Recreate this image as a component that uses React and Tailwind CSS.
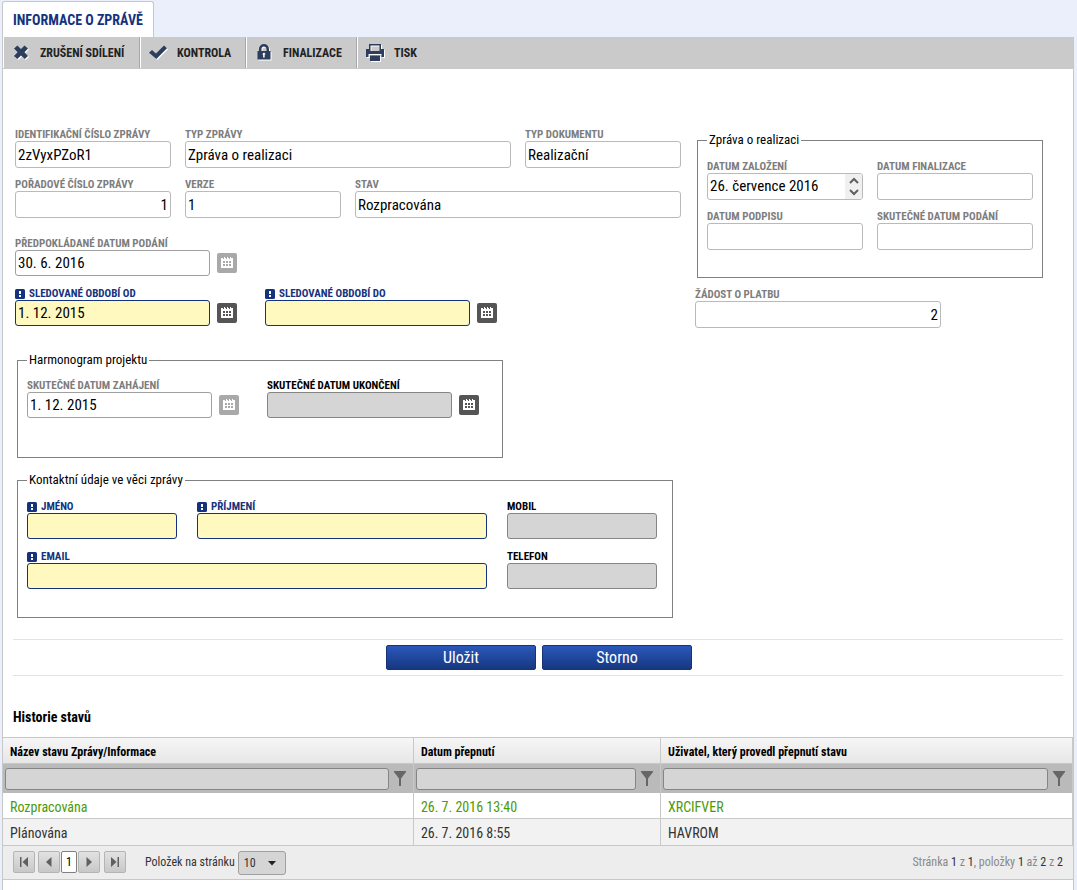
import React, { useState } from 'react';
import clsx from 'clsx';

const inputStyles = {
    plain: "border-[#bababa] bg-white h-[27px] text-[15px]",
    date: "border-[#a0a0a0] bg-white h-[26px] text-[15px]",
    required: "border-[#14327d] bg-[#fff9c0] h-[26px] text-[15px]",
    optional: "border-[#858585] bg-[#d5d5d5] h-[26px] text-[15px]",
};

const labelStyles = {
    plain: "text-[#7d7d7d]",
    date: "text-[#7d7d7d]",
    required: "text-[#14327d]",
    optional: "text-black",
};

function RequiredMark() {
    return (
        <svg width="10" height="10" viewBox="0 0 10 10" aria-hidden="true" className="shrink-0">
            <rect width="10" height="10" rx="1.5" fill="#14327d" />
            <path d="M4 2h2v3H4zM4 6h2v2H4z" fill="#fff" />
        </svg>
    );
}

function CalendarButton({ disabled, label }) {
    return (
        <button
            type="button"
            disabled={disabled}
            aria-label={label}
            className={clsx("flex size-5 shrink-0 items-center justify-center rounded-xs", disabled ? "bg-[#a9a9a9]" : "bg-[#555555]")}
        >
            <svg width="12" height="12" viewBox="0 0 12 12" shapeRendering="crispEdges">
                <path d="M0 1h2v1h1V0h1v1h1v1h1V0h1v1h1v1h1V0h1v1h2v10H0z" fill="#fff" />
                <path
                    d="M2 4h2v2H2zM5 4h2v2H5zM8 4h2v2H8zM2 7h2v2H2zM5 7h2v2H5zM8 7h2v2H8z"
                    fill={disabled ? "#a9a9a9" : "#555555"}
                />
            </svg>
        </button>
    );
}

function Field({ id, label, kind = "plain", value = "", width, align, calendar }) {
    return (
        <div>
            <label
                htmlFor={id}
                className={clsx("flex h-[13px] items-center gap-1 text-[11px] leading-[13px] font-bold whitespace-nowrap", labelStyles[kind])}
            >
                {kind === "required" && <RequiredMark />}
                {label}
            </label>
            <div className="flex items-center gap-[7px]">
                <input
                    id={id}
                    type="text"
                    defaultValue={value}
                    readOnly={kind === "plain" || kind === "date"}
                    className={clsx("rounded-[3px] border px-0.5 text-black outline-none", inputStyles[kind], width, align === "right" && "text-right")}
                />
                {calendar && <CalendarButton disabled={kind === "date"} label={`Kalendář: ${label}`} />}
            </div>
        </div>
    );
}

function SpinField({ id, label, value }) {
    return (
        <div>
            <label htmlFor={id} className="block h-[13px] text-[11px] leading-[13px] font-bold text-[#7d7d7d]">{label}</label>
            <div className="flex h-[27px] w-[156px] overflow-hidden rounded-[3px] border border-[#bababa] bg-white">
                <input id={id} type="text" defaultValue={value} readOnly className="min-w-0 flex-1 px-0.5 text-[15px] text-black outline-none" />
                <div className="flex w-[17px] flex-col bg-[#f0f0f0]">
                    <button type="button" aria-label="Zvýšit" className="flex flex-1 items-center justify-center">
                        <svg width="10" height="7" viewBox="0 0 10 7"><path d="M1 6l4-4 4 4" fill="none" stroke="#606060" strokeWidth="2" /></svg>
                    </button>
                    <button type="button" aria-label="Snížit" className="flex flex-1 items-center justify-center">
                        <svg width="10" height="7" viewBox="0 0 10 7"><path d="M1 1l4 4 4-4" fill="none" stroke="#606060" strokeWidth="2" /></svg>
                    </button>
                </div>
            </div>
        </div>
    );
}

function Group({ title, className, children }) {
    return (
        <fieldset className={clsx("border border-[#808080] px-[9px]", className)}>
            <legend className="px-0.5 text-[13px] leading-[18px] text-black">{title}</legend>
            {children}
        </fieldset>
    );
}

const toolbarItems = [
    {
        title: "ZRUŠENÍ SDÍLENÍ",
        width: "w-[137px]",
        icon: <path d="M5.500 2.500L9 6l3.500-3.500L16 5.500 12.500 9.200 16 13l-3.200 3L9 12.400 5.300 16 2 13l3.600-3.800L2 5.500z" />,
    },
    {
        title: "KONTROLA",
        width: "w-[106px]",
        icon: <path d="M0 9.800L3 7l4 3.600L15 2.500l3 2.800L7.300 16z" />,
    },
    {
        title: "FINALIZACE",
        width: "w-[111px]",
        icon: (
            <path
                fillRule="evenodd"
                d="M4 8V6a5 5 0 0 1 10 0v2h1.500v8.500h-13V8zM6.500 8h5V6a2.500 2.500 0 0 0-5 0zM9 9.800a1.500 1.500 0 0 0-.9 2.600V14.500h1.800v-2.100A1.500 1.500 0 0 0 9 9.800z"
            />
        ),
    },
    {
        title: "TISK",
        width: "w-[72px]",
        icon: (
            <>
                <path fillRule="evenodd" d="M3 1h12v5h3v8h-2.500v-3h-13v3H0V6h3zM4.500 2.500V8h9V2.500z" />
                <path d="M4 12.500h10V18H4z" />
            </>
        ),
    },
];

function Toolbar() {
    return (
        <div className="flex h-8 bg-[#cacaca] pb-px">
            {toolbarItems.map((item) => (
                <button
                    key={item.title}
                    type="button"
                    className={clsx("flex shrink-0 items-center gap-[9px] border-r border-l border-r-[#a8a8a8] border-l-white pl-2 text-xs font-bold text-[#222] last:border-r-0", item.width)}
                >
                    <svg width="19" height="19" viewBox="0 0 19 19" className="shrink-0" aria-hidden="true">
                        <g fill="#fff" transform="translate(1 1)">{item.icon}</g>
                        <g fill="#2c3e5c">{item.icon}</g>
                    </svg>
                    {item.title}
                </button>
            ))}
        </div>
    );
}

function ReportForm() {
    return (
        <form className="px-2.5 pt-[59px]" onSubmit={(e) => e.preventDefault()}>
            <div className="flex gap-3.5 pl-0.5">
                <div className="w-[666px] shrink-0">
                    <div className="flex flex-wrap gap-x-3.5 gap-y-2.5">
                        <Field id="ident" label="IDENTIFIKAČNÍ ČÍSLO ZPRÁVY" value="2zVyxPZoR1" width="w-[156px]" />
                        <Field id="typ" label="TYP ZPRÁVY" value="Zpráva o realizaci" width="w-[326px]" />
                        <Field id="dokument" label="TYP DOKUMENTU" value="Realizační" width="w-[156px]" />
                        <Field id="poradi" label="POŘADOVÉ ČÍSLO ZPRÁVY" value="1" width="w-[156px]" align="right" />
                        <Field id="verze" label="VERZE" value="1" width="w-[156px]" />
                        <Field id="stav" label="STAV" value="Rozpracována" width="w-[326px]" />
                    </div>
                    <div className="mt-[19px] flex flex-col gap-[11px]">
                        <Field id="podani" label="PŘEDPOKLÁDANÉ DATUM PODÁNÍ" kind="date" value="30. 6. 2016" width="w-[195px]" calendar />
                        <div className="flex gap-7">
                            <Field id="od" label="SLEDOVANÉ OBDOBÍ OD" kind="required" value="1. 12. 2015" width="w-[195px]" calendar />
                            <Field id="do" label="SLEDOVANÉ OBDOBÍ DO" kind="required" width="w-[205px]" calendar />
                        </div>
                    </div>
                </div>
                <div className="flex flex-col gap-2.5 pt-[3px]">
                    <Group title="Zpráva o realizaci" className="ml-0.5 w-[346px] pb-[27px]">
                        <div className="grid grid-cols-[156px_156px] gap-x-3.5 gap-y-2.5 pt-[11px]">
                            <SpinField id="zalozeni" label="DATUM ZALOŽENÍ" value="26. července 2016" />
                            <Field id="finalizace" label="DATUM FINALIZACE" width="w-[156px]" />
                            <Field id="podpis" label="DATUM PODPISU" width="w-[156px]" />
                            <Field id="skutecne" label="SKUTEČNÉ DATUM PODÁNÍ" width="w-[156px]" />
                        </div>
                    </Group>
                    <Field id="platba" label="ŽÁDOST O PLATBU" value="2" width="w-[246px]" align="right" />
                </div>
            </div>

            <Group title="Harmonogram projektu" className="mt-[23px] ml-1 w-[486px] pb-[39px]">
                <div className="flex gap-7 pt-2.5">
                    <Field id="zahajeni" label="SKUTEČNÉ DATUM ZAHÁJENÍ" kind="date" value="1. 12. 2015" width="w-[185px]" calendar />
                    <Field id="ukonceni" label="SKUTEČNÉ DATUM UKONČENÍ" kind="optional" width="w-[185px]" calendar />
                </div>
            </Group>

            <Group title="Kontaktní údaje ve věci zprávy" className="mt-[13px] ml-1 w-[656px] pb-7">
                <div className="flex flex-wrap gap-x-5 gap-y-[11px] pt-[11px]">
                    <Field id="jmeno" label="JMÉNO" kind="required" width="w-[150px]" />
                    <Field id="prijmeni" label="PŘÍJMENÍ" kind="required" width="w-[290px]" />
                    <Field id="mobil" label="MOBIL" kind="optional" width="w-[150px]" />
                    <Field id="email" label="EMAIL" kind="required" width="w-[460px]" />
                    <Field id="telefon" label="TELEFON" kind="optional" width="w-[150px]" />
                </div>
            </Group>

            <div className="mt-[21px] flex h-[37px] items-center justify-center gap-1.5 border-y border-[#e3e3e3] pl-0.5">
                {["Uložit", "Storno"].map((title) => (
                    <button
                        key={title}
                        type="button"
                        className="h-[25px] w-[150px] rounded-xs border border-[#173377] bg-linear-to-b from-[#2a58bb] to-[#173880] text-base leading-6 text-white"
                    >
                        {title}
                    </button>
                ))}
            </div>
        </form>
    );
}

const columns = [
    { key: "stav", header: "Název stavu Zprávy/Informace", width: "w-[38.4%]" },
    { key: "datum", header: "Datum přepnutí", width: "w-[23.1%]" },
    { key: "uzivatel", header: "Uživatel, který provedl přepnutí stavu", width: "w-[38.5%]" },
];

const rows = [
    { stav: "Rozpracována", datum: "26. 7. 2016 13:40", uzivatel: "XRCIFVER", active: true },
    { stav: "Plánována", datum: "26. 7. 2016 8:55", uzivatel: "HAVROM" },
];

function HistoryTable() {
    return (
        <table className="w-full table-fixed border-separate border-spacing-0 border-t border-[#c8c8c8]">
            <thead>
                <tr className="h-[26px] bg-linear-to-b from-[#f6f6f6] to-[#e6e6e6]">
                    {columns.map((col) => (
                        <th key={col.key} scope="col" className={clsx("border-r border-b border-[#c8c8c8] p-0 pt-0.5 pl-[7px] text-left text-xs font-bold text-black", col.width)}>
                            {col.header}
                        </th>
                    ))}
                </tr>
                <tr className="h-[29px] bg-[#bababa]">
                    {columns.map((col) => (
                        <td key={col.key} className="border-r border-[#c8c8c8] p-0">
                            <div className="flex items-center gap-[5px] pr-[7px] pl-0.5">
                                <input type="text" aria-label={col.header} className="h-[22px] min-w-0 flex-1 rounded-[3px] border border-[#858585] bg-[#d5d5d5] px-1 text-[13px] outline-none" />
                                <button type="button" aria-label="Filtr" className="shrink-0">
                                    <svg width="12" height="15" viewBox="0 0 12 15"><path d="M0 0h12v1L7 7.500V15H5V7.500L0 1z" fill="#666" /></svg>
                                </button>
                            </div>
                        </td>
                    ))}
                </tr>
            </thead>
            <tbody>
                {rows.map((row) => (
                    <tr key={row.stav} className={clsx("text-sm leading-5", row.active ? "h-[26px] text-[#4d9a06]" : "h-[27px] bg-[#f2f2f2] text-[#333]")}>
                        {columns.map((col) => (
                            <td key={col.key} className="border-r border-b border-[#c8c8c8] p-0 pt-0.5 pl-[7px]">{row[col.key]}</td>
                        ))}
                    </tr>
                ))}
            </tbody>
        </table>
    );
}

const pagerIcons = {
    first: "M2 1h1.500v10H2zM10 1v10L4.500 6z",
    prev: "M8.500 1v10L3 6z",
    next: "M3.500 1v10L9 6z",
    last: "M8.500 1H10v10H8.500zM2 1v10l5.500-5z",
};

function PagerButton({ icon, label }) {
    return (
        <button type="button" aria-label={label} className="flex size-[22px] items-center justify-center rounded-xs border border-[#b4b4b4] bg-linear-to-b from-[#e2e2e2] to-[#c8c8c8]">
            <svg width="12" height="12" viewBox="0 0 12 12"><path d={pagerIcons[icon]} fill="#606060" /></svg>
        </button>
    );
}

function Pager() {
    const [size, setSize] = useState("10");

    return (
        <div className="flex items-start justify-between border-b border-[#c8c8c8] bg-[#ededed] px-2.5 pt-[5px] pb-1 text-xs text-[#333]">
            <div className="flex items-start">
                <div className="flex items-center">
                    <PagerButton icon="first" label="První stránka" />
                    <span className="w-[3px]" />
                    <PagerButton icon="prev" label="Předchozí stránka" />
                    <button type="button" className="mx-px h-[22px] w-4 rounded-xs border border-[#808080] bg-white text-xs text-black">1</button>
                    <PagerButton icon="next" label="Další stránka" />
                    <span className="w-1" />
                    <PagerButton icon="last" label="Poslední stránka" />
                </div>
                <label htmlFor="size" className="mr-[3px] ml-[19px] leading-[22px]">Položek na stránku</label>
                <div className="relative">
                    <select id="size" value={size} onChange={(e) => setSize(e.target.value)} className="block h-6 w-12 appearance-none rounded-[3px] border border-[#a0a0a0] bg-[#d5d5d5] pl-[5px] text-xs text-[#333] outline-none">
                        <option value="10">10</option>
                        <option value="20">20</option>
                        <option value="50">50</option>
                    </select>
                    <svg width="8" height="5" viewBox="0 0 8 5" className="pointer-events-none absolute top-2.5 right-2.5"><path d="M0 0h8L4 4.500z" fill="#222" /></svg>
                </div>
            </div>
            <p className="leading-[22px] text-[#8a8a8a]">
                Stránka <b className="font-normal text-[#333]">1</b> z <b className="font-normal text-[#333]">1</b>, položky <b className="font-normal text-[#333]">1</b> až <b className="font-normal text-[#333]">2</b> z <b className="font-normal text-[#333]">2</b>
            </p>
        </div>
    );
}

export default function App() {
    return (
        <div className="flex min-h-screen flex-col bg-[#ebeffc] pt-px pr-[3px] pl-0.5 font-['Roboto_Condensed','Liberation_Sans_Narrow',Roboto,sans-serif]">
            <nav className="flex">
                <a href="#zprava" className="flex h-9 items-center rounded-t-[3px] border border-b-0 border-[#c8c8c8] bg-white px-2.5 text-sm font-bold text-[#14327d]">
                    INFORMACE O ZPRÁVĚ
                </a>
            </nav>
            <main id="zprava" className="flex-1 border-x border-[#c8c8c8] bg-white">
                <Toolbar />
                <ReportForm />
                <h2 className="mt-[31px] mb-2.5 pl-2.5 text-sm leading-5 font-bold text-black">Historie stavů</h2>
                <HistoryTable />
                <Pager />
            </main>
        </div>
    );
}
